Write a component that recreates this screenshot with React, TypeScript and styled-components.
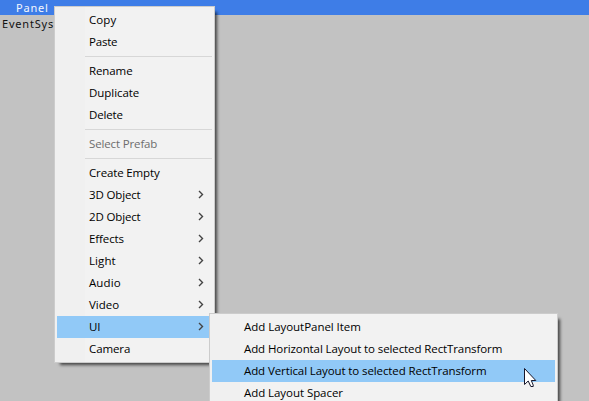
import React from "react";
import styled, { createGlobalStyle } from "styled-components";

const GlobalStyle = createGlobalStyle`
  * { box-sizing: border-box; }
  body { margin: 0; overflow: hidden; background: #c2c2c2; }
`;

const Hierarchy = styled.main`
  position: relative;
  width: 589px;
  height: 401px;
  overflow: hidden;
  background: #c2c2c2;
  font-family: "Open Sans", sans-serif;
`;

const TreeRow = styled.div<{ $selected?: boolean; $indent: number }>`
  height: ${(p) => (p.$selected ? 15 : 16)}px;
  line-height: ${(p) => (p.$selected ? 15 : 17)}px;
  padding-left: ${(p) => p.$indent}px;
  color: ${(p) => (p.$selected ? "#f4f7fd" : "#111")};
  background: ${(p) => (p.$selected ? "#3e7de7" : "transparent")};
  font-family: "Noto Sans", sans-serif;
  font-size: 11px;
  letter-spacing: 0.8px;
  white-space: nowrap;
`;

const Menu = styled.div<{ $x: number; $y: number; $width: number }>`
  position: absolute;
  left: ${(p) => p.$x}px;
  top: ${(p) => p.$y}px;
  width: ${(p) => p.$width}px;
  padding: 2px;
  border: 1px solid #ccc;
  background: linear-gradient(to right, #f0f0f0 30px, #f2f2f2 30px);
  box-shadow: 4px 4px 3px -2px rgba(0, 0, 0, 0.65);
`;

const MenuItem = styled.div<{ $active?: boolean; $disabled?: boolean }>`
  display: flex;
  align-items: flex-start;
  justify-content: space-between;
  height: 22px;
  padding: 0 8px 0 32px;
  background: ${(p) => (p.$active ? "#91c9f7" : "transparent")};
  color: ${(p) => (p.$disabled ? "#6d6d6d" : "#000")};
  font-size: 11.5px;
  white-space: nowrap;
`;

const Label = styled.span<{ $spacing: number }>`
  line-height: 21px;
  letter-spacing: ${(p) => p.$spacing}px;
`;

const Separator = styled.div`
  height: 7px;
  padding: 3px 0 0 28px;
  &::after {
    content: "";
    display: block;
    height: 1px;
    background: #d7d7d7;
  }
`;

const Arrow = styled.svg`
  width: 6px;
  height: 9px;
  margin-top: 6px;
`;

const Pointer = styled.svg`
  position: absolute;
  left: 524px;
  top: 368px;
  width: 13px;
  height: 20px;
`;

type Entry = {
  label: string;
  submenu?: boolean;
  active?: boolean;
  disabled?: boolean;
  spacing?: number;
} | null;

const contextItems: Entry[] = [
  { label: "Copy", spacing: 0.1 },
  { label: "Paste", spacing: -0.2 },
  null,
  { label: "Rename" },
  { label: "Duplicate", spacing: -0.05 },
  { label: "Delete", spacing: -0.15 },
  null,
  { label: "Select Prefab", disabled: true, spacing: -0.14 },
  null,
  { label: "Create Empty", spacing: -0.14 },
  { label: "3D Object", submenu: true, spacing: -0.15 },
  { label: "2D Object", submenu: true, spacing: -0.15 },
  { label: "Effects", submenu: true, spacing: -0.1 },
  { label: "Light", submenu: true, spacing: 0.1 },
  { label: "Audio", submenu: true, spacing: 0.1 },
  { label: "Video", submenu: true, spacing: 0 },
  { label: "UI", submenu: true, active: true },
  { label: "Camera" },
];

const layoutItems: Entry[] = [
  { label: "Add LayoutPanel Item", spacing: -0.04 },
  { label: "Add Horizontal Layout to selected RectTransform" },
  { label: "Add Vertical Layout to selected RectTransform", active: true },
  { label: "Add Layout Spacer", spacing: -0.06 },
];

function Entries({ items }: { items: Entry[] }) {
  return (
    <>
      {items.map((item, index) =>
        item ? (
          <MenuItem key={item.label} $active={item.active} $disabled={item.disabled}>
            <Label $spacing={item.spacing ?? -0.1}>{item.label}</Label>
            {item.submenu && (
              <Arrow viewBox="0 0 6 9">
                <path d="M1 1L4.5 4.5L1 8" fill="none" stroke="#444" strokeWidth="1.4" />
              </Arrow>
            )}
          </MenuItem>
        ) : (
          <Separator key={index} />
        ),
      )}
    </>
  );
}

export default function App() {
  return (
    <Hierarchy>
      <GlobalStyle />
      <TreeRow $selected $indent={16}>Panel</TreeRow>
      <TreeRow $indent={2}>EventSystem</TreeRow>
      <Menu $x={54} $y={6} $width={161}>
        <Entries items={contextItems} />
      </Menu>
      <Menu $x={209} $y={313} $width={349}>
        <Entries items={layoutItems} />
      </Menu>
      <Pointer viewBox="0 0 13 20">
        <path
          d="M.5 .5V16.5L4.2 13L6.8 18.5H9.2V17L7.3 12.5H11.8Z"
          fill="#fff"
          stroke="#17172b"
        />
      </Pointer>
    </Hierarchy>
  );
}
